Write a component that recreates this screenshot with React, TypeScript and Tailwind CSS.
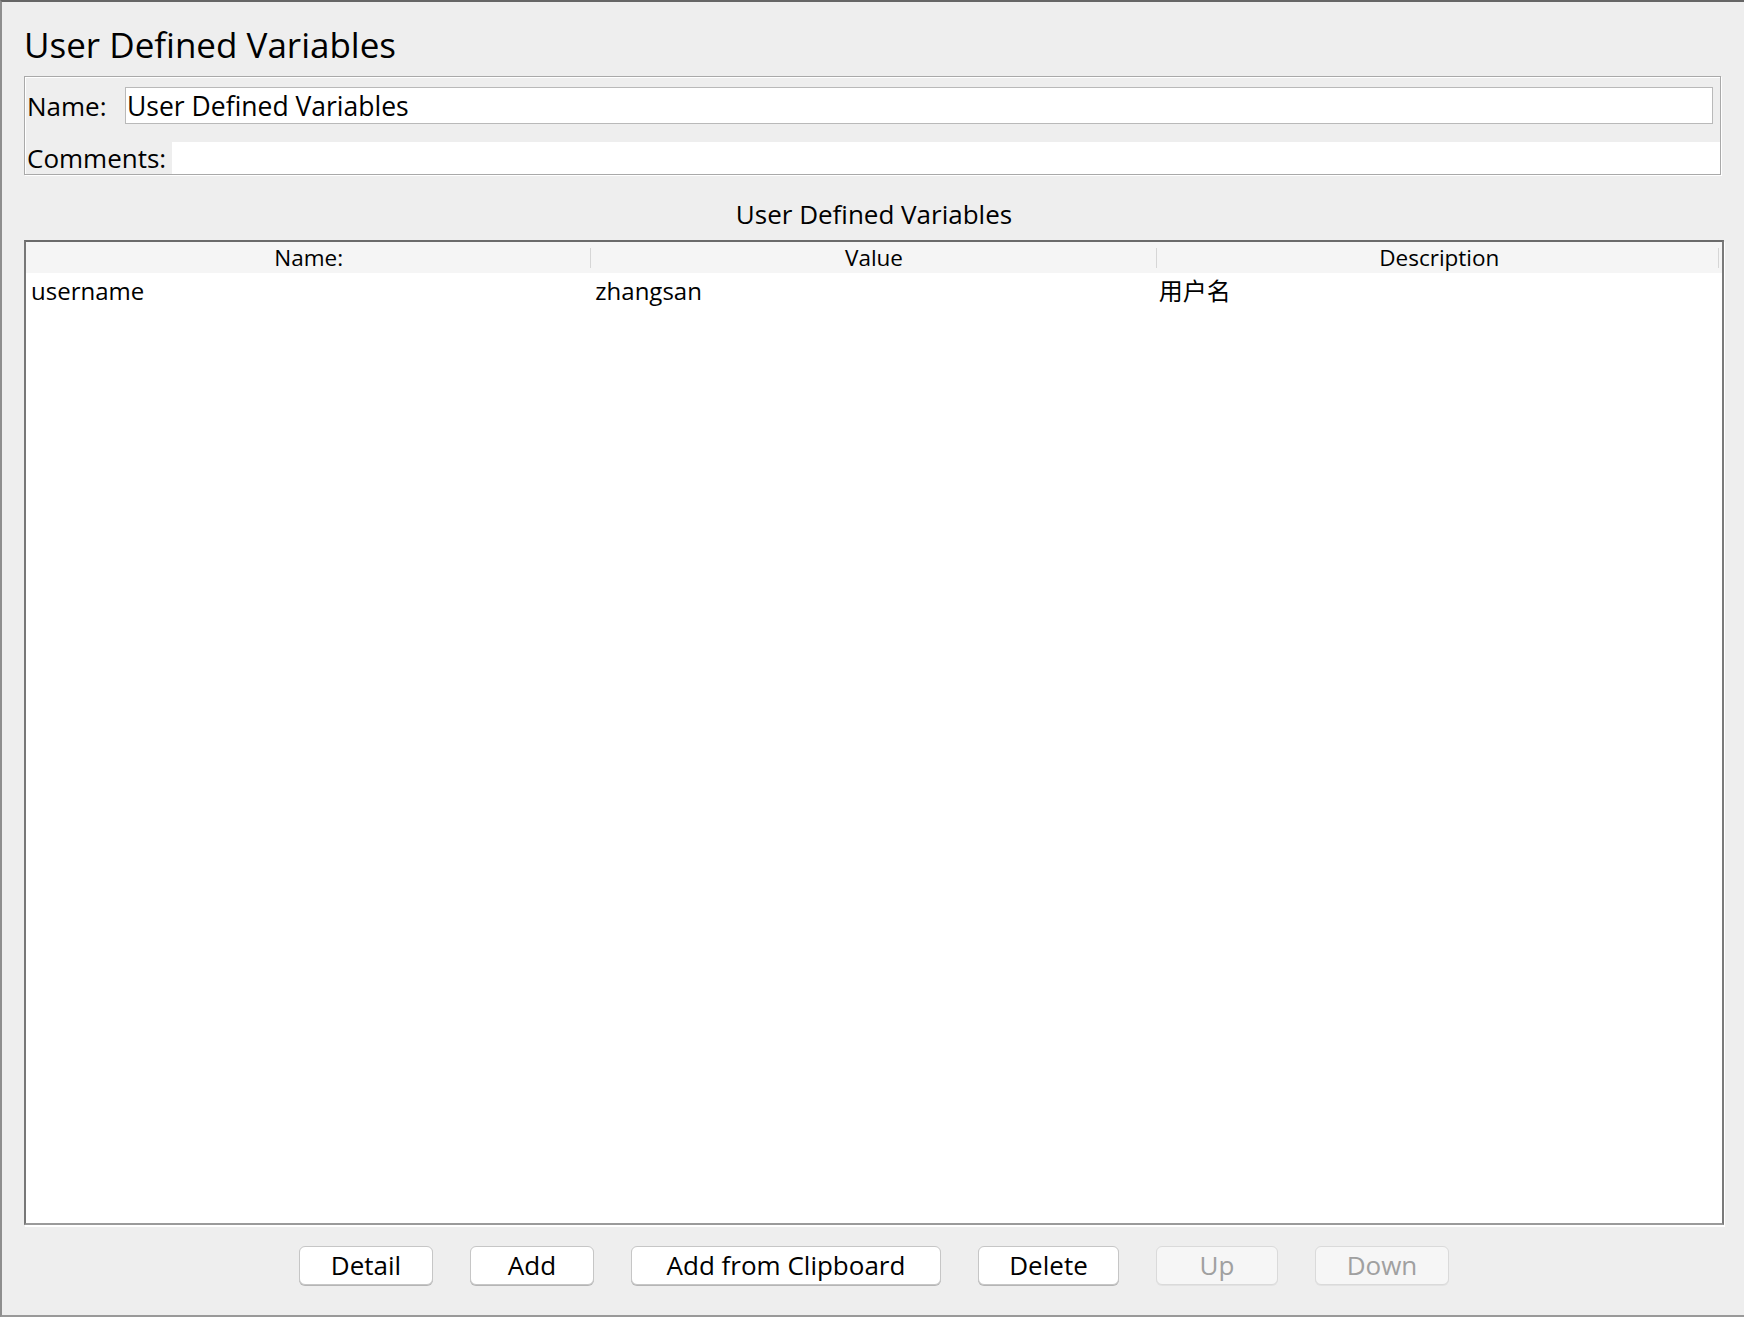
import React from "react";

function Btn({ label, w, disabled }: { label: string; w: string; disabled?: boolean }) {
  return (
    <div
      className={
        "h-[39px] rounded-[6px] border text-center text-[26px] leading-[37px] " +
        w +
        (disabled
          ? " bg-[#f6f6f6] border-[#dadada] text-[#a0a0a0] shadow-[0_1px_0_#e2e2e2]"
          : " bg-white border-[#c6c6c6] text-black shadow-[0_1px_0_#b5b5b5]")
      }
    >
      {label}
    </div>
  );
}

export default function App() {
  return (
    <div className="w-[1746px] h-[1318px] bg-white font-['Open_Sans','Noto_Sans_CJK_SC',sans-serif] text-black">
      <div className="w-[1744px] h-[1317px] bg-[#eeeeee] border-t-2 border-l-2 border-b-2 border-t-[#666666] border-l-[#8e8e8e] border-b-[#999999] flex flex-col">
        {/* Title */}
        <div className="ml-[22px] mt-[23px] h-[40px] text-[35px] leading-[40px]">User Defined Variables</div>

        {/* Name / Comments panel */}
        <div className="ml-[22px] mt-[11px] w-[1697px] h-[99px] border border-[#a9a9a9] shadow-[inset_1px_1px_0_#ffffff,1px_1px_0_#ffffff] flex flex-col">
          <div className="mt-[10px] h-[37px] flex">
            <div className="w-[100px] pl-[2px] pt-[1px] text-[26px] leading-[37px]">Name:</div>
            <div className="w-[1588px] h-[37px] border border-[#b9b9b9] bg-white pl-[1px] text-[26.5px] leading-[37px]">
              User Defined Variables
            </div>
          </div>
          <div className="mt-[18px] h-[32px] flex">
            <div className="w-[147px] pl-[2px] text-[26px] leading-[32px]">Comments:</div>
            <div className="flex-1 bg-white"></div>
          </div>
        </div>

        {/* Table title */}
        <div className="ml-[22px] mt-[21px] w-[1700px] h-[36px] text-center text-[26px] leading-[36px]">
          User Defined Variables
        </div>

        {/* Table */}
        <div className="ml-[22px] mt-[8px] w-[1700px] h-[985px] border-2 border-t-[#6b6b6b] border-l-[#777777] border-r-[#7a7a7a] border-b-[#9a9a9a] bg-white shadow-[1px_2px_0_#ffffff]">
          <div className="h-[31px] bg-[#f5f5f5] grid grid-cols-3 text-[22.5px] leading-[31px]">
            <div className="relative text-center">
              Name:
              <div className="absolute right-0 top-[6px] h-[20px] w-px bg-[#d6d6d6]"></div>
            </div>
            <div className="relative text-center">
              Value
              <div className="absolute right-0 top-[6px] h-[20px] w-px bg-[#d6d6d6]"></div>
            </div>
            <div className="relative text-center">
              Description
              <div className="absolute right-[3px] top-[6px] h-[20px] w-px bg-[#d6d6d6]"></div>
            </div>
          </div>
          <div className="h-[34px] grid grid-cols-3 text-[24px] leading-[36px]">
            <div className="pl-[5px]">username</div>
            <div className="pl-[4px]">zhangsan</div>
            <div className="pl-[2px]">用户名</div>
          </div>
        </div>

        {/* Buttons */}
        <div className="ml-[22px] mt-[21px] w-[1700px] flex justify-center gap-[37px]">
          <Btn label="Detail" w="w-[134px]" />
          <Btn label="Add" w="w-[124px]" />
          <Btn label="Add from Clipboard" w="w-[310px]" />
          <Btn label="Delete" w="w-[141px]" />
          <Btn label="Up" w="w-[122px]" disabled />
          <Btn label="Down" w="w-[134px]" disabled />
        </div>
      </div>
    </div>
  );
}
